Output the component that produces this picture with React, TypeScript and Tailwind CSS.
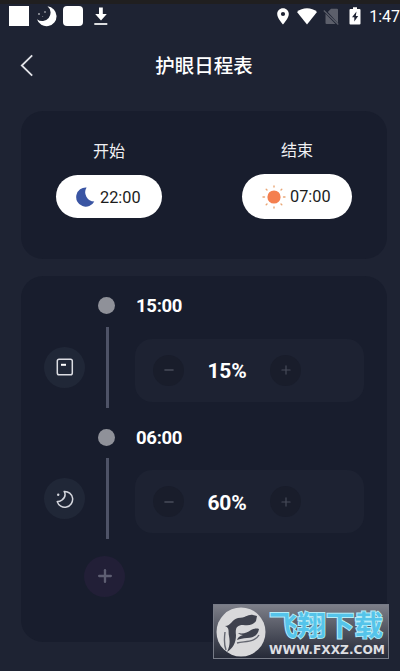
import { Minus, Plus } from 'lucide-react';

interface ScheduleEntry {
  time: string;
  percent: number;
  icon: 'day' | 'night';
}

const entries: ScheduleEntry[] = [
  { time: '15:00', percent: 15, icon: 'day' },
  { time: '06:00', percent: 60, icon: 'night' },
];

const StatusBar = () => (
  <div className="h-[28px] border-t-4 border-[#201f20] flex items-start pl-[9px] text-white overflow-hidden">
    <div className="mt-[2px] w-[20px] h-[20px] bg-white" />
    <svg className="mt-[2px] ml-[7px] w-[21px] h-[21px] shrink-0" viewBox="0 0 21 21" fill="currentColor">
      <path d="M11.5 0.3A10 10 0 1 1 1 13.2A7.4 7.4 0 1 0 11.5 0.3Z" />
      <circle cx="3" cy="8" r="0.8" />
      <circle cx="9" cy="6" r="0.7" />
      <circle cx="6.8" cy="10.3" r="0.4" />
    </svg>
    <div className="mt-[2px] ml-[6px] w-[21px] h-[20px] rounded-[4px] bg-white" />
    <svg className="mt-[3px] ml-[11px] w-[14px] h-[19px] shrink-0" viewBox="0 0 14 19" fill="currentColor">
      <path d="M5 0.5h3.8v6.5h4L7 13.5L1.2 7H5z" />
      <path d="M0.3 16h13v2h-13z" opacity="0.85" />
    </svg>

    <svg className="mt-[4px] ml-[168px] w-[14px] h-[17px] shrink-0" viewBox="0 0 14 17">
      <path fill="currentColor" fillRule="evenodd" d="M7 0.3C3.7 0.3 1.2 2.8 1.2 6c0 4.2 5.8 10.5 5.8 10.5S12.8 10.2 12.8 6C12.8 2.8 10.3 0.3 7 0.3zM7 3.9a2.1 2.1 0 1 1 0 4.2a2.1 2.1 0 0 1 0-4.2z" />
    </svg>
    <svg className="mt-[4px] ml-[7px] w-[20px] h-[17px] shrink-0" viewBox="0 0 20 17" fill="currentColor">
      <path d="M0 4C2.8 1.6 6.2 0.3 10 0.3S17.2 1.6 20 4L10 16.5z" />
    </svg>
    <svg className="mt-[4px] ml-[6px] w-[17px] h-[17px] shrink-0" viewBox="0 0 17 17">
      <path fill="#5c5f6b" d="M8 0.8h6a1 1 0 0 1 1 1v13.4L4.8 4z" />
      <path fill="#5c5f6b" d="M2.5 5.8L12.5 16H3.5a1 1 0 0 1-1-1z" />
      <path stroke="#5c5f6b" strokeWidth="1.2" d="M0.8 2.5L15.3 16.5" />
    </svg>
    <svg className="mt-[3px] ml-[9px] w-[12px] h-[18px] shrink-0" viewBox="0 0 12 18">
      <path fill="currentColor" fillRule="evenodd" d="M4 0.3h4V2h2.5a1 1 0 0 1 1 1v13.4a1 1 0 0 1-1 1h-9a1 1 0 0 1-1-1V3a1 1 0 0 1 1-1H4zM7.5 4.6L3 10.2h2.3v4.4L9.2 9H6.8z" />
    </svg>
    <span className="mt-px ml-[8px] text-[16px] leading-[24px] whitespace-nowrap shrink-0">1:47</span>
  </div>
);

const MoonIcon = () => (
  <svg className="w-[19px] h-[20px]" viewBox="0 0 19 20">
    <path fill="#3a55a3" d="M10.6 0.5A9.6 9.6 0 1 0 18.3 14.5A9.2 9.2 0 0 1 10.6 0.5Z" />
  </svg>
);

const SunIcon = () => (
  <svg className="w-[24px] h-[24px]" viewBox="0 0 24 24">
    <circle cx="12" cy="12" r="6.6" fill="#f47f4f" />
    <path
      stroke="#e9a777"
      strokeWidth="1.4"
      strokeLinecap="round"
      d="M12 1v1M12 22v1M1 12h1.5M21.5 12H23M4.2 4.2l.8.8M19 19l.8.8M19.8 4.2l-.8.8M5 19l-.8.8"
    />
  </svg>
);

const EntryIcon = ({ icon }: { icon: ScheduleEntry['icon'] }) => (
  <div className="w-[41px] h-[41px] rounded-full bg-[#202737] flex items-center justify-center">
    {icon === 'day' ? (
      <svg className="w-[18px] h-[18px]" viewBox="0 0 18 18" fill="none" stroke="#dcdde3">
        <rect x="1.3" y="1.3" width="15" height="15.4" rx="1.8" strokeWidth="1.5" />
        <path d="M5 6.8h5" stroke="#fff" strokeWidth="2" />
      </svg>
    ) : (
      <svg className="w-[18px] h-[18px]" viewBox="0 0 18 18" fill="none" stroke="#d4d6dd" strokeWidth="1.5">
        <path strokeLinejoin="round" d="M8.2 1.4A7.9 7.9 0 1 1 1.2 11.6C1.2 11.6 3.5 11.8 5.8 10.2C9.5 7.5 9.4 3.8 8.2 1.4Z" />
        <circle cx="2.2" cy="4.8" r="1.2" fill="#d4d6dd" stroke="none" />
      </svg>
    )}
  </div>
);

const ScheduleRow = ({ entry }: { entry: ScheduleEntry }) => (
  <div className="h-[131.5px]">
    <div className="h-[20px] flex items-center pl-[77px]">
      <div className="w-[17px] h-[17px] rounded-full bg-[#8f9199]" />
      <span className="mt-px ml-[21px] text-[18.5px] tracking-[-0.3px] font-bold text-white leading-[20px]">{entry.time}</span>
    </div>
    <div className="mt-[11px] h-[81px] flex items-center pl-[23px]">
      <EntryIcon icon={entry.icon} />
      <div className="ml-[21px] w-[3px] h-[81px] bg-[#4e5367]" />
      <div className="ml-[26px] mt-[6px] w-[229px] h-[63px] rounded-[17px] bg-[#1d2232] flex items-center pl-[18px]">
        <button className="w-[31px] h-[31px] rounded-full bg-[#191d2b] flex items-center justify-center">
          <Minus className="w-[14px] h-[14px] text-[#484c5b]" strokeWidth={2.4} />
        </button>
        <span className="mt-[4px] w-[86px] text-center text-[21px] tracking-[-0.2px] font-bold text-white">{entry.percent}%</span>
        <button className="w-[31px] h-[31px] rounded-full bg-[#191d2b] flex items-center justify-center">
          <Plus className="w-[14px] h-[14px] text-[#484c5b]" strokeWidth={2} />
        </button>
      </div>
    </div>
  </div>
);

const Watermark = () => (
  <div className="absolute left-[213px] top-[604px] w-[176px] h-[55px] border border-[#777b87] bg-linear-to-b from-[#7d7f89] via-[#50535f] to-[#262a38] flex items-start">
    <svg className="mt-[2px] ml-[2px] w-[50px] h-[50px] shrink-0" viewBox="0 0 50 50">
      <circle cx="25" cy="25" r="24.5" fill="#d9d9db" />
      <path fill="#3f424e" d="M9 19C15 19 16 12 22 11C30 11 32 7 37 8L41 9L40 14C37 18 33 19 27 18C21 18 19 21 20 28C20 36 17 41 11 45C14 39 14 34 13 29C12 24 14 21 9 19Z" />
      <path fill="#3f424e" d="M22 26C27 27 31 26 35 23C37 22 40 21 43 22C42 28 38 31 31 31C27 31 24 32 21 33C22 30 24 29 27 28C25 28 23 27 22 26Z" />
      <path fill="none" stroke="#646771" strokeWidth="1.4" d="M9 25C8 33 8 38 10 43M21 36C31 34 39 35 43 28" />
    </svg>
    <div className="ml-[2px] flex flex-col">
      <svg className="w-[119px] h-[39px] overflow-visible" viewBox="0 0 119 39">
        <text
          x="1"
          y="31"
          textLength="114"
          lengthAdjust="spacingAndGlyphs"
          fontSize="28"
          fontWeight="700"
          fill="#55c4ea"
          stroke="#b5edf8"
          strokeWidth="1.8"
          paintOrder="stroke"
          className="font-['Noto_Sans_CJK_SC',sans-serif]"
        >
          飞翔下载
        </text>
      </svg>
      <svg className="w-[119px] h-[14px] overflow-visible" viewBox="0 0 119 14">
        <text
          x="1"
          y="10"
          textLength="116"
          lengthAdjust="spacingAndGlyphs"
          fontSize="12.5"
          fontWeight="700"
          fill="#dedfe3"
          className="font-['DejaVu_Sans',sans-serif]"
        >
          WWW.FXXZ.COM
        </text>
      </svg>
    </div>
  </div>
);

const App = () => {
  return (
    <div className="relative w-[400px] h-[671px] overflow-hidden bg-[#1e2333] font-[Roboto,'Noto_Sans_CJK_SC',sans-serif]">
      <StatusBar />

      {/* Header */}
      <div className="h-[74px] grid grid-cols-[40px_1fr_32px] items-center">
        <svg className="ml-[20px] w-[14px] h-[23px]" viewBox="0 0 14 23" fill="none" stroke="#e2e3e8" strokeWidth="1.8">
          <path d="M12.2 1.3L1.8 11.5L12.2 21.7" />
        </svg>
        <h1 className="pt-[4px] text-center text-[19.5px] font-medium text-white">护眼日程表</h1>
      </div>

      <div className="px-[21px] mt-[9px] w-[408px]">
        {/* Start / end times */}
        <section className="w-[366px] h-[148px] rounded-[22px] bg-[#181d2d] flex">
          <div className="ml-[35px] pt-[29px] w-[106px] flex flex-col items-center">
            <span className="text-[16px] leading-[24px] text-[#f0f0f3]">开始</span>
            <button className="mt-[11px] w-[106px] h-[43px] rounded-full bg-white flex items-center pl-[20px]">
              <MoonIcon />
              <span className="mt-[3px] ml-[5px] text-[16.3px] text-[#1c1c1c]">22:00</span>
            </button>
          </div>
          <div className="ml-[80px] pt-[28px] w-[110px] flex flex-col items-center">
            <span className="text-[16px] leading-[24px] text-[#f0f0f3]">结束</span>
            <button className="mt-[11px] w-[110px] h-[45px] rounded-full bg-white flex items-center pl-[20px]">
              <SunIcon />
              <span className="mt-[2px] ml-[4px] text-[16.3px] text-[#1c1c1c]">07:00</span>
            </button>
          </div>
        </section>

        {/* Brightness schedule */}
        <section className="mt-[17px] w-[366px] h-[366px] pt-[19.5px] rounded-[22px] bg-[#181d2d]">
          {entries.map((entry) => (
            <ScheduleRow key={entry.time} entry={entry} />
          ))}
          <button className="ml-[63px] -mt-[3px] w-[41px] h-[41px] rounded-full bg-[#221f37] flex items-center justify-center">
            <Plus className="w-[20px] h-[20px] text-[#5e5e72]" strokeWidth={2.8} />
          </button>
        </section>
      </div>

      <Watermark />
    </div>
  );
};

export default App;
